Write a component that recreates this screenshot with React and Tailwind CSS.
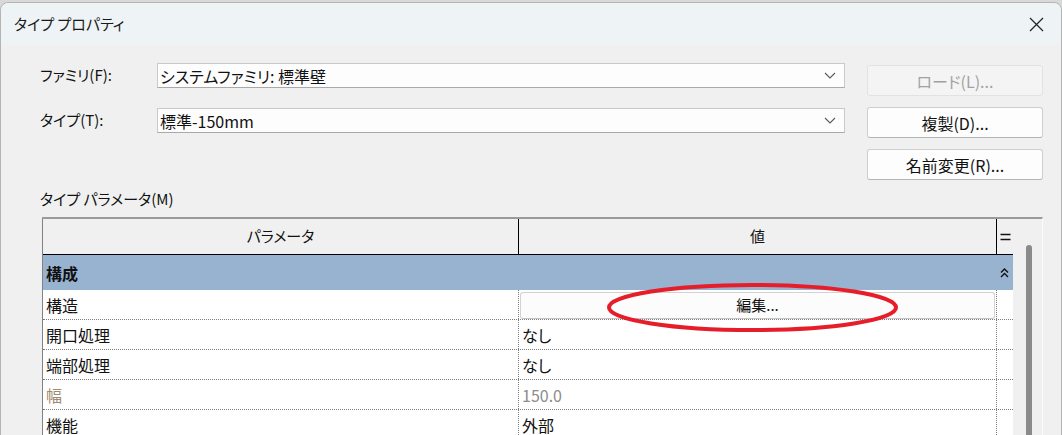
import React from 'react'

const ROWS = [
  { name: '構造', edit: true },
  { name: '開口処理', value: 'なし' },
  { name: '端部処理', value: 'なし' },
  { name: '幅', value: '150.0', dim: true },
  { name: '機能', value: '外部' },
]

function Chevron() {
  return (
    <svg width="12" height="7" viewBox="0 0 12 7" className="shrink-0">
      <path d="M1 1 L6 6 L11 1" fill="none" stroke="#5a5a5a" strokeWidth="1.1" />
    </svg>
  )
}

function Select({ value }) {
  return (
    <div className="flex h-[25px] w-[688px] items-center justify-between border border-[#c9c9c9] border-b-[#a9a9a9] bg-[#fdfdfd] pl-[2px] pr-[8px] text-[16px] text-[#111]">
      <span>{value}</span>
      <Chevron />
    </div>
  )
}

function Btn({ children, disabled }) {
  return (
    <div
      className={
        'flex h-[31px] w-[176px] items-center justify-center rounded-[3px] border text-[16px] ' +
        (disabled
          ? 'border-[#e2e2e2] bg-[#f4f4f4] text-[#a2a2a2]'
          : 'border-[#cfcfcf] border-b-[#b5b5b5] bg-[#fdfdfd] text-[#111]')
      }
    >
      {children}
    </div>
  )
}

function Row({ row }) {
  return (
    <div className="flex h-[30px] border-b border-dotted border-[#7c7c7c] text-[16px]">
      <div className={'flex w-[475px] items-center pl-[3px] ' + (row.dim ? 'text-[#a08a70]' : 'text-[#111]')}>{row.name}</div>
      <div className="flex w-[478px] items-center border-l border-dotted border-[#7c7c7c]">
        {row.edit ? (
          <div className="ml-[1px] mr-[1px] mt-[1px] flex h-[27px] flex-1 items-center justify-center rounded-[3px] border border-[#d2d2d2] border-b-[#c4c4c4] bg-[#fcfcfc] text-[15px] text-[#111]">
            編集...
          </div>
        ) : (
          <span className={'pl-[3px] ' + (row.dim ? 'text-[#8c8c8c]' : 'text-[#111]')}>{row.value}</span>
        )}
      </div>
      <div className="w-[17px] border-l border-dotted border-[#7c7c7c]" />
    </div>
  )
}

export default function App() {
  return (
    <div className="relative h-[435px] w-[1062px] overflow-hidden bg-[#d9d9d9] pt-[2px] font-['Noto_Sans_CJK_JP','Noto_Sans',sans-serif] [font-feature-settings:'palt']">
      <div className="h-[440px] rounded-t-[8px] border border-[#b4b4b4] bg-[#f0f0f0]">
        {/* title bar */}
        <div className="flex h-[42px] items-center justify-between rounded-t-[8px] bg-[#eef3f6] pl-[13px] pr-[17px]">
          <span className="text-[15px] text-[#1a1a1a]">タイプ プロパティ</span>
          <svg width="15" height="15" viewBox="0 0 15 15">
            <path d="M1 1 L14 14 M14 1 L1 14" stroke="#222" strokeWidth="1.2" />
          </svg>
        </div>

        {/* controls */}
        <div className="flex pl-[39px]">
          <div className="flex w-[806px] flex-col gap-[20px] pt-[18px]">
            <div className="flex items-center">
              <span className="w-[117px] text-[15px] text-[#111]">ファミリ(F):</span>
              <Select value="システムファミリ: 標準壁" />
            </div>
            <div className="flex items-center">
              <span className="w-[117px] text-[15px] text-[#111]">タイプ(T):</span>
              <Select value="標準-150mm" />
            </div>
          </div>
          <div className="ml-[21px] flex flex-col gap-[11px] pt-[20px]">
            <Btn disabled>ロード(L)...</Btn>
            <Btn>複製(D)...</Btn>
            <Btn>名前変更(R)...</Btn>
          </div>
        </div>

        <div className="mt-[9px] h-[20px] pl-[39px] text-[15px] leading-[20px] text-[#111]">タイプ パラメータ(M)</div>

        {/* table */}
        <div className="ml-[41px] mt-[8px] flex w-[1001px] border-t-2 border-r border-t-[#9a9a9a] border-r-[#fafafa]">
          <div className="w-[972px] border-l border-[#828282] bg-white">
            <div className="flex h-[36px] border-b border-black bg-[#f0f0f0] text-[15px] text-[#111]">
              <div className="flex w-[475px] items-center justify-center">パラメータ</div>
              <div className="flex w-[478px] items-center justify-center border-l border-black">値</div>
              <div className="flex w-[17px] items-center justify-center border-l border-black">
                <svg width="11" height="8" viewBox="0 0 11 8">
                  <path d="M0.5 1.5 H10.5 M0.5 6.5 H10.5" stroke="#111" strokeWidth="1.3" />
                </svg>
              </div>
            </div>
            <div className="flex h-[35px] items-center bg-[#98b3d0]">
              <span className="w-[953px] pl-[3px] text-[16px] font-bold text-[#111]">構成</span>
              <div className="flex w-[17px] justify-center">
                <svg width="9" height="10" viewBox="0 0 9 10">
                  <path d="M1 4.5 L4.5 1 L8 4.5 M1 9 L4.5 5.5 L8 9" fill="none" stroke="#111" strokeWidth="1.4" />
                </svg>
              </div>
            </div>
            {ROWS.map((r) => (
              <Row key={r.name} row={r} />
            ))}
          </div>
          <div className="flex w-[29px] justify-center bg-[#f0f0f0] pt-[26px]">
            <div className="ml-[3px] h-[300px] w-[6px] rounded-t-[3px] bg-[#8a8a8a]" />
          </div>
        </div>
      </div>

      {/* red annotation */}
      <svg className="absolute left-[600px] top-[280px]" width="306" height="56" viewBox="0 0 306 56">
        <ellipse cx="152.5" cy="27.5" rx="143.5" ry="22.5" fill="none" stroke="#e61e2a" strokeWidth="4" />
      </svg>
    </div>
  )
}
